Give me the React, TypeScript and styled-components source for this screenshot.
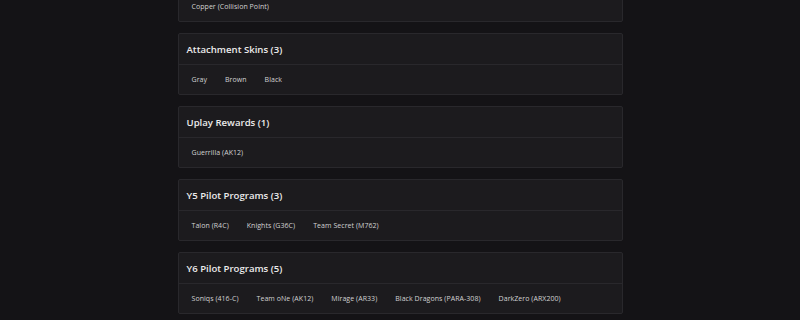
import React, { useLayoutEffect, useRef } from "react";
import styled, { createGlobalStyle } from "styled-components";

const Global = createGlobalStyle`
  html, body { margin: 0; padding: 0; background: #141316; }
  body { font-family: "Open Sans", "Liberation Sans", sans-serif; }
`;

const Viewport = styled.div`
  height: 320px;
  overflow: hidden;
  background: #141316;
`;

const List = styled.div`
  width: 445px;
  margin: 0 auto;
  padding: 12px 0;
  display: flex;
  flex-direction: column;
  gap: 11px;
`;

const Card = styled.section`
  background: #1c1b1e;
  border: 1px solid #29282c;
  border-radius: 2px;
  display: flex;
  flex-direction: column;
`;

const Header = styled.h3`
  margin: 0;
  height: 30px;
  display: flex;
  align-items: center;
  padding: 0 8px;
  border-bottom: 1px solid #29282c;
  color: #ececec;
  font-size: 9.6px;
  font-weight: 600;
  letter-spacing: 0;
`;

const Body = styled.div`
  height: 29px;
  display: flex;
  align-items: center;
  padding: 0 4px;
`;

const Item = styled.span`
  padding: 0 9px;
  color: #d2d2d2;
  font-size: 7px;
  font-weight: 500;
  letter-spacing: 0.05px;
  white-space: nowrap;
`;

const data: { title: string; items: string[] }[] = [
  { title: "Pro League Skins (1)", items: ["Copper (Collision Point)"] },
  { title: "Attachment Skins (3)", items: ["Gray", "Brown", "Black"] },
  { title: "Uplay Rewards (1)", items: ["Guerrilla (AK12)"] },
  { title: "Y5 Pilot Programs (3)", items: ["Talon (R4C)", "Knights (G36C)", "Team Secret (M762)"] },
  {
    title: "Y6 Pilot Programs (5)",
    items: ["Soniqs (416-C)", "Team oNe (AK12)", "Mirage (AR33)", "Black Dragons (PARA-308)", "DarkZero (ARX200)"],
  },
  { title: "Y7 Pilot Programs (4)", items: ["Placeholder"] },
];

export default function App() {
  const ref = useRef<HTMLDivElement>(null);
  useLayoutEffect(() => {
    if (ref.current) ref.current.scrollTop = 52;
  }, []);
  return (
    <>
      <Global />
      <Viewport ref={ref}>
        <List>
          {data.map((g) => (
            <Card key={g.title}>
              <Header>{g.title}</Header>
              <Body>
                {g.items.map((i) => (
                  <Item key={i}>{i}</Item>
                ))}
              </Body>
            </Card>
          ))}
        </List>
      </Viewport>
    </>
  );
}
